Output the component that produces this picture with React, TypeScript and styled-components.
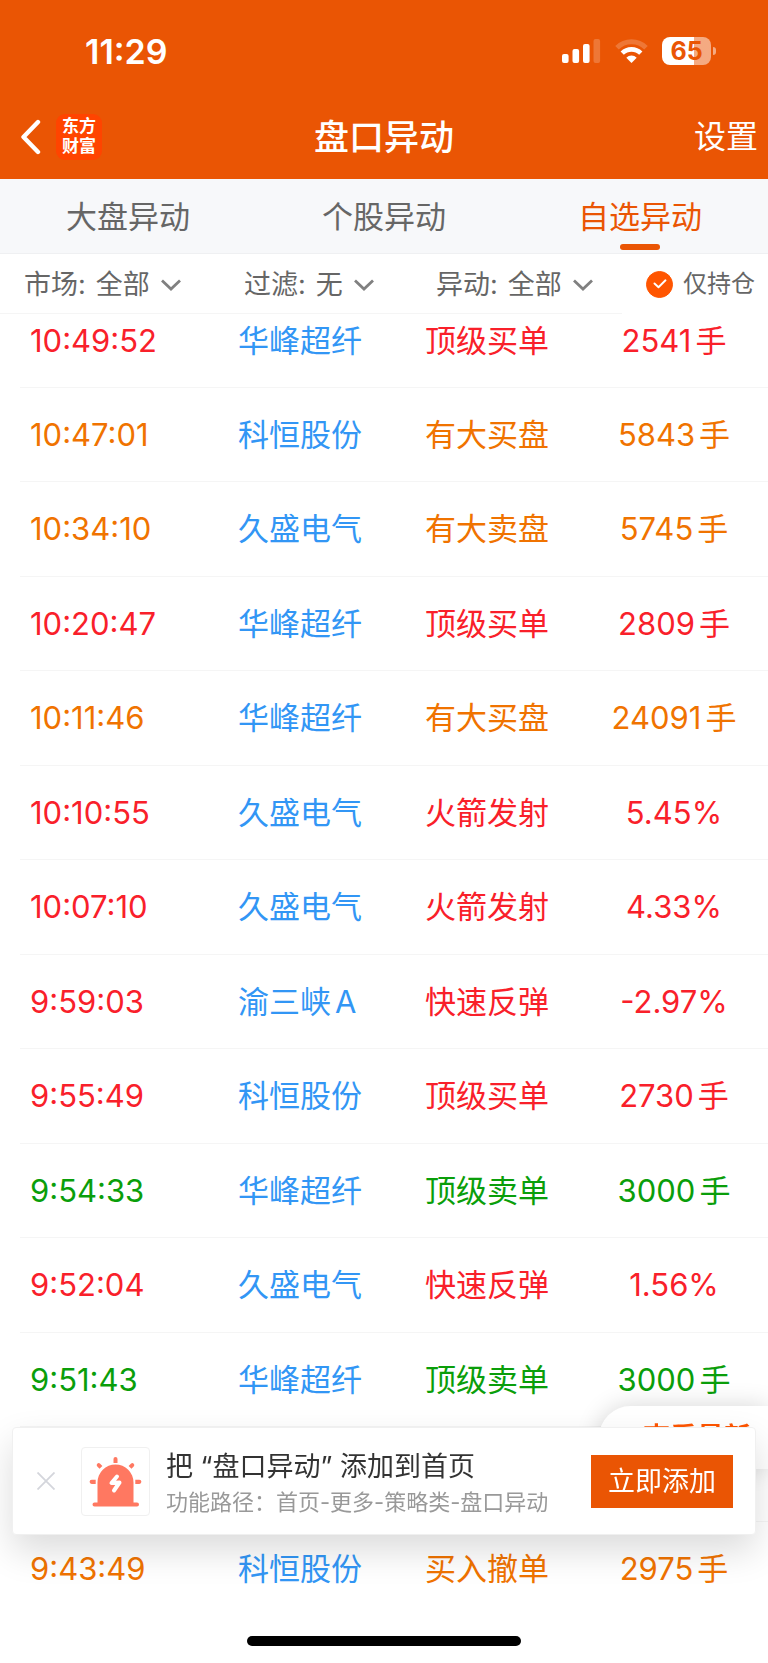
import React from "react";
import styled, { createGlobalStyle } from "styled-components";

const BRAND = "#ea5504";

const GlobalStyle = createGlobalStyle`
  *, *::before, *::after { box-sizing: border-box; }
  body {
    margin: 0;
    background: #fff;
    color: #333;
    font-family: Inter, "Noto Sans CJK SC", sans-serif;
  }
  button, select, input { font: inherit; color: inherit; }
  button { border: 0; padding: 0; background: none; cursor: pointer; }
`;

const Page = styled.div`
  min-height: 100vh;
  background: #fff;
`;

const TopArea = styled.div`
  position: sticky;
  top: 0;
  z-index: 2;
  background: #fff;
`;

const Header = styled.header`
  background: ${BRAND};
  color: #fff;
`;

const StatusBar = styled.div`
  display: flex;
  align-items: center;
  justify-content: space-between;
  height: 94px;
  padding: 8px 52px 0 85px;
`;

const Clock = styled.time`
  padding-top: 2px;
  font-size: 34px;
  line-height: 40px;
  font-weight: 600;
`;

const StatusIcons = styled.div`
  display: flex;
  align-items: center;
  gap: 14px;
`;

const Battery = styled.div`
  display: flex;
  align-items: center;
  gap: 2px;
`;

const BatteryBody = styled.div<{ $level: number }>`
  width: 49px;
  height: 28px;
  border-radius: 8px;
  background: linear-gradient(
    to right,
    #fff ${(p) => p.$level}%,
    rgba(255, 255, 255, 0.5) ${(p) => p.$level}%
  );
  color: ${BRAND};
  font-size: 25px;
  line-height: 28px;
  font-weight: 700;
  text-align: center;
`;

const BatteryTip = styled.div`
  width: 3px;
  height: 8px;
  border-radius: 0 4px 4px 0;
  background: rgba(255, 255, 255, 0.5);
`;

const NavBar = styled.div`
  display: grid;
  grid-template-columns: 1fr auto 1fr;
  align-items: center;
  height: 85px;
  padding: 0 10px;
`;

const NavStart = styled.div`
  display: flex;
  align-items: center;
  gap: 14px;
  padding-left: 10px;
`;

const BackButton = styled.button`
  display: flex;
`;

const Logo = styled.a`
  display: flex;
  flex-direction: column;
  align-items: center;
  justify-content: center;
  width: 46px;
  height: 46px;
  padding-bottom: 4px;
  border-radius: 9px;
  background: #ff4400;
  color: #fff;
  text-decoration: none;
`;

const LogoLine = styled.span`
  height: 20px;
  font-family: "Noto Sans CJK SC", sans-serif;
  font-size: 17px;
  line-height: 20px;
  font-weight: 700;
`;

const Title = styled.h1`
  margin: 0;
  font-size: 35px;
  line-height: 48px;
  font-weight: 500;
`;

const SettingsButton = styled.button`
  justify-self: end;
  font-size: 32px;
  line-height: 48px;
`;

const Tabs = styled.nav`
  display: grid;
  grid-template-columns: repeat(3, 1fr);
  height: 75px;
  background: #f7f8fa;
  border-bottom: 1px solid #eff0f2;
`;

const Tab = styled.a<{ $active?: boolean }>`
  display: flex;
  flex-direction: column;
  align-items: center;
  justify-content: space-between;
  padding: 14px 0 3px;
  color: ${(p) => (p.$active ? BRAND : "#666")};
  font-size: 31px;
  line-height: 48px;
  text-decoration: none;

  &::after {
    content: "";
    width: 40px;
    height: 6px;
    border-radius: 3px;
    background: ${(p) => (p.$active ? BRAND : "transparent")};
  }
`;

const FilterBar = styled.form`
  display: flex;
  height: 60px;
  color: #666;
`;

const Filters = styled.div`
  flex: 1;
  display: grid;
  grid-template-columns: 220fr 192fr 186fr;
  align-items: center;
  padding: 2px 0 0 24px;
  border-bottom: 1px solid #f5f5f5;
`;

const Filter = styled.label`
  display: flex;
  align-items: center;
  gap: 10px;
  font-size: 27px;
  line-height: 40px;
  white-space: nowrap;
`;

const SelectBox = styled.span`
  display: grid;
  align-items: center;
  justify-items: end;

  > * { grid-area: 1 / 1; }
  svg { pointer-events: none; }
`;

const Select = styled.select`
  appearance: none;
  field-sizing: content;
  border: 0;
  margin: 0;
  padding: 0 31px 0 0;
  background: none;
  line-height: 40px;
`;

const HoldingOnly = styled.label`
  display: flex;
  align-items: center;
  gap: 10px;
  width: 146px;
  padding-left: 24px;
  font-size: 24px;
  line-height: 40px;
  white-space: nowrap;
`;

const CheckBoxWrap = styled.span`
  display: grid;
  place-items: center;

  > * { grid-area: 1 / 1; }
  svg { pointer-events: none; }
`;

const CheckBox = styled.input`
  appearance: none;
  width: 27px;
  height: 27px;
  margin: 0;
  border: 1px solid #bbb;
  border-radius: 50%;

  &:checked { background: #ff5500; border-color: #ff5500; }
`;

/* The list is scrolled a little, so its first row starts under the filter bar. */
const List = styled.main`
  margin-top: -20px;
  padding: 0 0 46px 20px;
`;

const Table = styled.table`
  width: 100%;
  table-layout: fixed;
  border-collapse: separate;
  border-spacing: 0;
  font-size: 31px;
  line-height: 44px;
  white-space: nowrap;
`;

const Column = styled.col<{ $width: number }>`
  width: ${(p) => p.$width}px;
`;

type Tone = "red" | "orange" | "green";
const tones: Record<Tone, string> = {
  red: "#f9202a",
  orange: "#f07300",
  green: "#0a9e0a",
};

const Row = styled.tr<{ $tone?: Tone }>`
  height: 94px;
  color: ${(p) => (p.$tone ? tones[p.$tone] : "inherit")};

  &:nth-child(odd):not(:first-child) { height: 95px; }
  &:not(:last-child) > td { border-bottom: 1px solid #f5f5f5; }
`;

const Cell = styled.td`
  padding: 0;
`;

const TimeCell = styled(Cell)`
  padding-left: 10px;
`;

const StockCell = styled(Cell)`
  color: #3296f5;
`;

const ValueCell = styled(Cell)`
  padding-left: 4px;
  text-align: center;
`;

const Suffix = styled.span`
  margin-left: 4px;
`;

const LatestButton = styled.button`
  position: fixed;
  right: 0;
  bottom: 194px;
  z-index: 3;
  width: 169px;
  height: 63px;
  padding-left: 44px;
  border-radius: 32px 0 0 32px;
  background: #fff;
  box-shadow: 0 0 24px rgba(0, 0, 0, 0.16);
  color: #ff5500;
  font-size: 27px;
  line-height: 63px;
  font-weight: 700;
  text-align: left;
`;

const Banner = styled.aside`
  position: fixed;
  left: 12px;
  right: 12px;
  bottom: 128px;
  z-index: 4;
  display: flex;
  align-items: center;
  height: 108px;
  padding: 0 22px 0 24px;
  border: 1px solid #f0f0f0;
  border-radius: 4px;
  background: #fff;
  box-shadow: 0 16px 36px rgba(0, 0, 0, 0.14);
`;

const CloseButton = styled.button`
  display: flex;
`;

const BannerIcon = styled.div`
  display: flex;
  width: 69px;
  height: 69px;
  margin: 0 16px 0 26px;
  border: 1px solid #f0f0f0;
  border-radius: 4px;
`;

const BannerText = styled.div`
  flex: 1;
  padding-top: 2px;
  white-space: nowrap;
`;

const BannerTitle = styled.div`
  font-size: 27px;
  line-height: 40px;
  color: #333;
`;

const BannerPath = styled.div`
  font-size: 22px;
  line-height: 31px;
  color: #999;
`;

const AddButton = styled.button`
  width: 142px;
  height: 53px;
  background: ${BRAND};
  color: #fff;
  font-size: 27px;
  line-height: 53px;
`;

const HomeIndicator = styled.div`
  position: fixed;
  left: 50%;
  bottom: 17px;
  z-index: 5;
  width: 274px;
  height: 10px;
  margin-left: -137px;
  border-radius: 5px;
  background: #000;
`;

const SignalIcon = () => (
  <svg width="39" height="24" viewBox="0 0 39 24" fill="#fff" aria-hidden="true">
    <rect x="0" y="15" width="6.6" height="9" rx="2" />
    <rect x="10.5" y="10" width="6.6" height="14" rx="2" />
    <rect x="21" y="5" width="6.6" height="19" rx="2" />
    <rect x="31.5" y="0" width="6.6" height="24" rx="2" opacity=".2" />
  </svg>
);

const WifiIcon = () => (
  <svg width="33" height="24" viewBox="0 0 33 24" fill="none" aria-hidden="true">
    <path d="M2 8.7a20.6 20.6 0 0 1 29 0" stroke="#fff" strokeOpacity=".2" strokeWidth="5" />
    <path d="M7.2 14.2a13.2 13.2 0 0 1 18.6 0" stroke="#fff" strokeWidth="4.6" />
    <path d="M16.5 24l-5.2-5.3a7.4 7.4 0 0 1 10.4 0z" fill="#fff" />
  </svg>
);

const BackIcon = () => (
  <svg width="22" height="36" viewBox="0 0 22 36" fill="none" aria-hidden="true">
    <path d="M18 3L3.5 18L18 33" stroke="#fff" strokeWidth="4.4" strokeLinecap="round" strokeLinejoin="round" />
  </svg>
);

const ChevronIcon = () => (
  <svg width="20" height="12" viewBox="0 0 20 12" fill="none" aria-hidden="true">
    <path d="M1 1.5L10 10L19 1.5" stroke="#808080" strokeWidth="2.8" />
  </svg>
);

const CheckIcon = () => (
  <svg width="14" height="10" viewBox="0 0 14 10" fill="none" aria-hidden="true">
    <path d="M1.5 4.5L5.5 8.2L12.5 1.3" stroke="#fff" strokeWidth="1.9" strokeLinecap="round" strokeLinejoin="round" />
  </svg>
);

const CloseIcon = () => (
  <svg width="18" height="18" viewBox="0 0 18 18" fill="none" aria-hidden="true">
    <path d="M.5.5l17 17M17.5.5l-17 17" stroke="#d4d6dc" strokeWidth="1.8" />
  </svg>
);

const SirenIcon = () => (
  <svg width="67" height="67" viewBox="0 0 67 67" fill="#ff7861" aria-hidden="true">
    <path d="M15.5 54.5V34.5a18 18 0 0 1 36 0v20h3.5a2 2 0 0 1 0 4H12.5a2 2 0 0 1 0-4z" />
    <path d="M31.5 15v-4a2 2 0 0 1 4 0v4z" />
    <path d="M13.7 31.7v4.2h-4a2 2 0 0 1 0-4.2zM53.3 31.7v4.2h4a2 2 0 0 0 0-4.2z" />
    <path d="M17.5 20.7l-2.4-2.4a2 2 0 0 1 2.8-2.8l2.5 2.4zM49.5 20.7l2.4-2.4a2 2 0 0 0-2.8-2.8l-2.5 2.4z" />
    <path d="M35 28.5L29.5 35L37.5 34.5L32 42.5" fill="none" stroke="#fff" strokeWidth="4" strokeLinecap="round" strokeLinejoin="round" />
  </svg>
);

interface Movement {
  time: string;
  stock: string;
  shareClass?: string;
  kind: string;
  value: string;
  unit?: string;
  tone: Tone;
}

const movements: (Movement | null)[] = [
  { time: "10:49:52", stock: "华峰超纤", kind: "顶级买单", value: "2541", unit: "手", tone: "red" },
  { time: "10:47:01", stock: "科恒股份", kind: "有大买盘", value: "5843", unit: "手", tone: "orange" },
  { time: "10:34:10", stock: "久盛电气", kind: "有大卖盘", value: "5745", unit: "手", tone: "orange" },
  { time: "10:20:47", stock: "华峰超纤", kind: "顶级买单", value: "2809", unit: "手", tone: "red" },
  { time: "10:11:46", stock: "华峰超纤", kind: "有大买盘", value: "24091", unit: "手", tone: "orange" },
  { time: "10:10:55", stock: "久盛电气", kind: "火箭发射", value: "5.45%", tone: "red" },
  { time: "10:07:10", stock: "久盛电气", kind: "火箭发射", value: "4.33%", tone: "red" },
  { time: "9:59:03", stock: "渝三峡", shareClass: "A", kind: "快速反弹", value: "-2.97%", tone: "red" },
  { time: "9:55:49", stock: "科恒股份", kind: "顶级买单", value: "2730", unit: "手", tone: "red" },
  { time: "9:54:33", stock: "华峰超纤", kind: "顶级卖单", value: "3000", unit: "手", tone: "green" },
  { time: "9:52:04", stock: "久盛电气", kind: "快速反弹", value: "1.56%", tone: "red" },
  { time: "9:51:43", stock: "华峰超纤", kind: "顶级卖单", value: "3000", unit: "手", tone: "green" },
  null,
  { time: "9:43:49", stock: "科恒股份", kind: "买入撤单", value: "2975", unit: "手", tone: "orange" },
];

const filters = [
  { label: "市场:", value: "全部" },
  { label: "过滤:", value: "无" },
  { label: "异动:", value: "全部" },
];

export default function App() {
  return (
    <Page>
      <GlobalStyle />
      <TopArea>
        <Header>
          <StatusBar>
            <Clock>11:29</Clock>
            <StatusIcons>
              <SignalIcon />
              <WifiIcon />
              <Battery>
                <BatteryBody $level={65}>65</BatteryBody>
                <BatteryTip />
              </Battery>
            </StatusIcons>
          </StatusBar>
          <NavBar>
            <NavStart>
              <BackButton type="button" aria-label="返回">
                <BackIcon />
              </BackButton>
              <Logo href="#home">
                <LogoLine>东方</LogoLine>
                <LogoLine>财富</LogoLine>
              </Logo>
            </NavStart>
            <Title>盘口异动</Title>
            <SettingsButton type="button">设置</SettingsButton>
          </NavBar>
        </Header>
        <Tabs>
          <Tab href="#market">大盘异动</Tab>
          <Tab href="#stocks">个股异动</Tab>
          <Tab href="#watchlist" $active aria-current="page">
            自选异动
          </Tab>
        </Tabs>
        <FilterBar>
          <Filters>
            {filters.map((f) => (
              <Filter key={f.label}>
                {f.label}
                <SelectBox>
                  <Select defaultValue={f.value}>
                    <option>{f.value}</option>
                  </Select>
                  <ChevronIcon />
                </SelectBox>
              </Filter>
            ))}
          </Filters>
          <HoldingOnly>
            <CheckBoxWrap>
              <CheckBox type="checkbox" defaultChecked />
              <CheckIcon />
            </CheckBoxWrap>
            仅持仓
          </HoldingOnly>
        </FilterBar>
      </TopArea>

      <List>
        <Table>
          <colgroup>
            <Column $width={218} />
            <Column $width={187} />
            <Column $width={151} />
            <Column $width={192} />
          </colgroup>
          <tbody>
            {movements.map((m, i) =>
              m ? (
                <Row key={i} $tone={m.tone}>
                  <TimeCell>{m.time}</TimeCell>
                  <StockCell>
                    {m.stock}
                    {m.shareClass && <Suffix>{m.shareClass}</Suffix>}
                  </StockCell>
                  <Cell>{m.kind}</Cell>
                  <ValueCell>
                    {m.value}
                    {m.unit && <Suffix>{m.unit}</Suffix>}
                  </ValueCell>
                </Row>
              ) : (
                <Row key={i}>
                  <Cell colSpan={4} />
                </Row>
              )
            )}
          </tbody>
        </Table>
      </List>

      <LatestButton type="button">查看最新</LatestButton>
      <Banner>
        <CloseButton type="button" aria-label="关闭">
          <CloseIcon />
        </CloseButton>
        <BannerIcon>
          <SirenIcon />
        </BannerIcon>
        <BannerText>
          <BannerTitle>把 “盘口异动” 添加到首页</BannerTitle>
          <BannerPath>功能路径：首页-更多-策略类-盘口异动</BannerPath>
        </BannerText>
        <AddButton type="button">立即添加</AddButton>
      </Banner>
      <HomeIndicator />
    </Page>
  );
}
